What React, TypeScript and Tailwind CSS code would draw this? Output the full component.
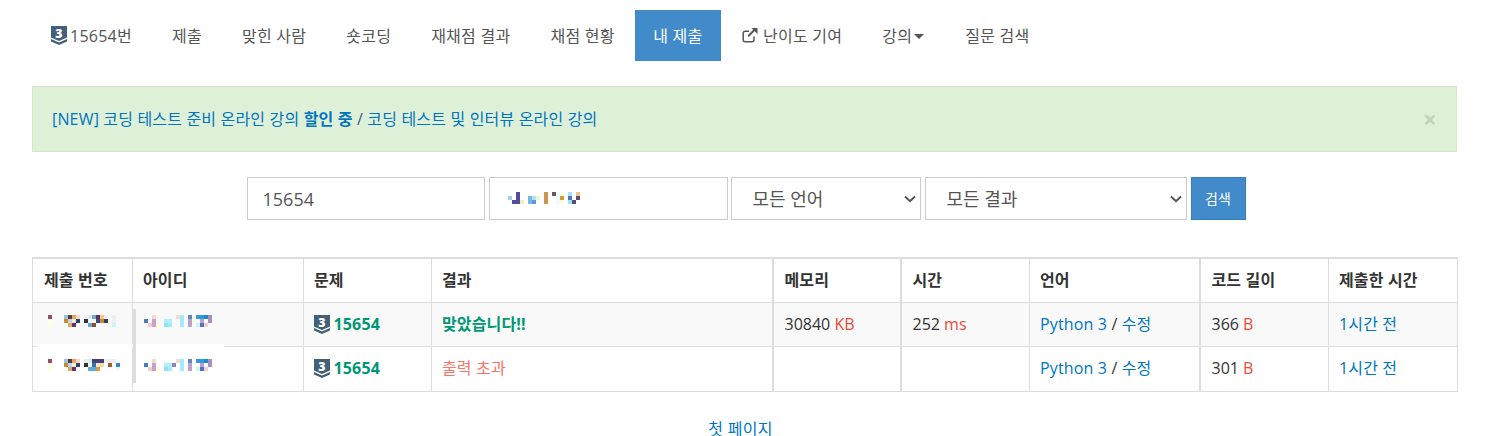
const font = "font-['Open_Sans','Noto_Sans_CJK_KR',sans-serif]";

type Cell = [number, number, string];

// censored blocks in the reference: 4px cells, [col, row, colour]
const idSearch: Cell[] = [
    [0, 1, '#a0d4ee'], [2, 0, '#4f4f9a'], [2, 1, '#4f4f9a'], [1, 2, '#4f4f9a'], [2, 2, '#4f4f9a'], [3, 2, '#fbe8c0'],
    [5, 1, '#78b4e8'], [6, 1, '#b4e0f0'], [7, 1, '#eef4d8'], [5, 2, '#78b4e8'], [6, 2, '#5f9ad8'],
    [9, 0, '#cc9650'], [9, 1, '#cc9650'], [9, 2, '#cc9650'],
    [11, 0, '#705860'], [12, 0, '#f0fcfc'], [13, 0, '#fdfde0'], [12, 1, '#e8fafa'], [13, 1, '#d8983c'], [12, 2, '#f0fcfc'], [13, 2, '#fdfde0'],
    [15, 0, '#a8dcf8'], [17, 0, '#f0c088'], [15, 1, '#5078b8'], [17, 1, '#585070'], [15, 2, '#a8dcf8'], [16, 2, '#585070'],
];

const noRow1: Cell[] = [
    [0, 0, '#9a4a6a'], [4, 0, '#9bc4dc'], [5, 0, '#5a3a3a'], [6, 0, '#e0a860'], [7, 0, '#f5dcc0'], [9, 0, '#eeeeee'], [10, 0, '#d0f0fa'], [11, 0, '#7aa5cf'], [12, 0, '#5a3060'], [13, 0, '#f5c88a'], [14, 0, '#eeeeee'], [16, 0, '#eeeeee'], [17, 0, '#f5fbfb'],
    [0, 1, '#fdfde8'], [4, 1, '#cc8830'], [5, 1, '#b8d8ee'], [6, 1, '#f0f0e0'], [7, 1, '#2f4070'], [9, 1, '#333333'], [12, 1, '#3a4a8a'], [13, 1, '#cc8830'], [14, 1, '#334055'], [16, 1, '#f0f0f0'],
    [0, 2, '#fdfde0'], [5, 2, '#e0a860'], [6, 2, '#6a3070'], [10, 2, '#5fa8e0'], [11, 2, '#8a5030'], [16, 2, '#c8f4fa'],
];

const noRow2: Cell[] = [
    [0, 0, '#9a4a6a'], [4, 0, '#9bc4dc'], [5, 0, '#5a3a3a'], [6, 0, '#e0a860'], [7, 0, '#f5dcc0'], [9, 0, '#eeeeee'], [10, 0, '#d0f0fa'], [11, 0, '#45407a'], [12, 0, '#45407a'], [13, 0, '#45407a'], [14, 0, '#eeeeee'], [15, 0, '#f0f0f0'], [16, 0, '#eeeeee'],
    [0, 1, '#fdfde8'], [4, 1, '#cc8830'], [5, 1, '#b8d8ee'], [6, 1, '#f0f0e0'], [7, 1, '#2f4070'], [9, 1, '#333333'], [11, 1, '#3f70a8'], [12, 1, '#f8e8c8'], [13, 1, '#f5dca0'], [15, 1, '#a85a28'], [17, 1, '#2f88d8'],
    [0, 2, '#fdfde0'], [5, 2, '#e0a860'], [6, 2, '#6a3070'], [10, 2, '#5fa8e0'], [11, 2, '#5fa8e0'], [12, 2, '#d89a40'], [17, 2, '#effbff'],
];

const idCells = (tail: string): Cell[] => [
    [2, 0, '#f8d8cc'], [8, 0, '#f0dcd0'], [9, 0, '#a8e8fc'], [11, 0, '#5a8ac0'], [13, 0, '#2f9adf'], [14, 0, '#2f9adf'], [15, 0, '#1f88cc'], [16, 0, '#a890c0'],
    [0, 1, '#4a78c8'], [2, 1, '#c8a0c8'], [5, 1, '#b0f0fc'], [6, 1, '#b0f0fc'], [7, 1, tail], [9, 1, '#a8e8fc'], [11, 1, '#c0a0c8'], [14, 1, '#c0a0c8'], [16, 1, '#a890c0'],
    [1, 2, '#f8c8cc'], [2, 2, '#c8a0c8'], [3, 2, '#fdfde0'], [5, 2, '#90e0f8'], [6, 2, '#a8e8fc'], [9, 2, '#a8e8fc'], [11, 2, '#c0a0c8'], [13, 2, '#c8f8f8'], [14, 2, '#5a70c8'], [15, 2, '#f0d0d0'],
];

function Mosaic({ cells, className }: { cells: Cell[]; className?: string }) {
    return (
        <svg width="72" height="12" viewBox="0 0 72 12" shapeRendering="crispEdges" className={className}>
            {cells.map(([c, r, fill]) => (
                <rect key={`${c}-${r}`} x={c * 4} y={r * 4} width="4" height="4" fill={fill} />
            ))}
        </svg>
    );
}

function TierIcon() {
    return (
        <svg width="16" height="19" viewBox="0 0 16 19" className="shrink-0">
            <path d="M0 0H16V11.5L8 15L0 11.5Z" fill="#435f7a" />
            <path d="M0 13L8 16.5L16 13V15.5L8 19L0 15.5Z" fill="#435f7a" />
            <text x="8" y="11.5" textAnchor="middle" fontSize="12.5" fontWeight="800" fill="#fff" fontFamily="'Open Sans', sans-serif">3</text>
        </svg>
    );
}

function ExternalIcon() {
    return (
        <svg width="16" height="15" viewBox="0 0 16 15" className="shrink-0">
            <path d="M7 3.2H3.2A2 2 0 0 0 1.2 5.2V11.8A2 2 0 0 0 3.2 13.8H10A2 2 0 0 0 12 11.8V8.5" fill="none" stroke="#555" strokeWidth="1.5" />
            <path d="M6.2 8.2L12.6 1.8" fill="none" stroke="#555" strokeWidth="2" />
            <path d="M9.5 0H15.5V6Z" fill="#555" />
        </svg>
    );
}

const navItems = ['제출', '맞힌 사람', '숏코딩', '재채점 결과', '채점 현황'];

function Nav() {
    return (
        <nav className="flex h-[51px] pl-[32px] mt-[10px] text-[#555] text-[16px] tracking-[0.25px]">
            <a className="flex items-center gap-[3px] pl-[19px] pr-[20px]">
                <TierIcon />
                <span>15654번</span>
            </a>
            {navItems.map((label) => (
                <a key={label} className="flex items-center px-[20px] whitespace-nowrap">{label}</a>
            ))}
            <a className="flex items-center px-[18.5px] bg-[#428bca] text-white whitespace-nowrap">내 제출</a>
            <a className="flex items-center gap-[5px] pl-[21px] pr-[20px] whitespace-nowrap">
                <ExternalIcon />
                난이도 기여
            </a>
            <a className="flex items-center pl-[20px] pr-[21px] whitespace-nowrap">
                강의
                <span className="ml-[2px] mt-[2px] border-x-[5px] border-t-[5px] border-x-transparent border-t-[#555]" />
            </a>
            <a className="flex items-center px-[20px] whitespace-nowrap">질문 검색</a>
        </nav>
    );
}

function Alert() {
    return (
        <div className="w-[1425px] ml-[32px] mt-[25px] h-[66px] pl-[19px] pr-[19px] flex items-center justify-between border border-[#d6e9c6] bg-[#dff0d8] text-[#0076c0] text-[16px] tracking-[0.17px]">
            <p>
                [NEW] 코딩 테스트 준비 온라인 강의 <b className="font-bold">할인 중</b> <span className="text-[#35607f]">/</span> 코딩 테스트 및 인터뷰 온라인 강의
            </p>
            <span className="text-[#c3d3bd] text-[24px] font-bold leading-none">×</span>
        </div>
    );
}

function Select({ label, width }: { label: string; width: string }) {
    return (
        <div className={`relative ${width}`}>
            <select className="w-full h-[43px] appearance-none border border-[#ccc] bg-white text-[#555] text-[18px] pl-[21px] pt-[1px] outline-none" defaultValue={label}>
                <option value={label}>{label}</option>
            </select>
            <svg width="12" height="8" viewBox="0 0 12 8" className="absolute right-[5px] top-[18px] pointer-events-none">
                <path d="M1 1.5L6 6.2L11 1.5" fill="none" stroke="#555" strokeWidth="2" />
            </svg>
        </div>
    );
}

function SearchBar() {
    const field = 'h-[43px] border border-[#ccc] bg-white text-[#555] text-[18px] px-[15px] outline-none';
    return (
        <form className="mt-[25px] flex justify-center pl-[2px] gap-[4px]">
            <input defaultValue="15654" className={`${field} w-[238px]`} />
            <div className="relative">
                <input className={`${field} w-[239px]`} />
                <Mosaic cells={idSearch} className="absolute left-[19px] top-[15px]" />
            </div>
            <div className="ml-[-1px]"><Select label="모든 언어" width="w-[190px]" /></div>
            <Select label="모든 결과" width="w-[262px]" />
            <button type="button" className="w-[55px] h-[43px] bg-[#428bca] border border-[#357ebd] text-white text-[14px]">검색</button>
        </form>
    );
}

const Unit = ({ children }: { children: string }) => <span className="text-[#e74c3c]">{children}</span>;

const cell = 'border border-[#ddd] px-[10px] align-middle';
const thick = 'border-l-2 border-l-[#ddd] pl-[11px]';

function Row({ shade, noCells, tail, result, memory, time, length }: {
    shade?: boolean;
    noCells: Cell[];
    tail: string;
    result: React.ReactNode;
    memory?: string;
    time?: string;
    length: string;
}) {
    // the last row is a pixel taller, its text stays where it was
    const td = shade ? cell : `${cell} pb-[1px]`;
    return (
        <tr className={shade ? 'h-[44px] bg-[#f9f9f9]' : 'h-[45px] bg-white'}>
            <td className={td}><Mosaic cells={noCells} className="ml-[5px] -mt-[6px]" /></td>
            <td className={td}><Mosaic cells={idCells(tail)} className="ml-[1px] -mt-[6px]" /></td>
            <td className={td}>
                <a className="flex items-center gap-[3.5px] font-bold text-[#009874]"><TierIcon />15654</a>
            </td>
            <td className={td}>{result}</td>
            <td className={`${td} ${thick} tracking-normal`}>{memory && <>{memory} <Unit>KB</Unit></>}</td>
            <td className={`${td} ${thick} tracking-normal`}>{time && <>{time} <Unit>ms</Unit></>}</td>
            <td className={`${td} text-[#0076c0]`}>Python 3 <span className="text-[#333]">/</span> 수정</td>
            <td className={`${td} ${thick} tracking-normal`}>{length} <Unit>B</Unit></td>
            <td className={`${td} text-[#0076c0]`}>1시간 전</td>
        </tr>
    );
}

const columns = [
    { label: '제출 번호', w: 'w-[100px] pl-[11px]' },
    { label: '아이디', w: 'w-[171px]' },
    { label: '문제', w: 'w-[128px]' },
    { label: '결과', w: 'w-[341px]' },
    { label: '메모리', w: 'w-[128px]', bold: true },
    { label: '시간', w: 'w-[129px]', bold: true },
    { label: '언어', w: 'w-[170px]' },
    { label: '코드 길이', w: 'w-[129px]', bold: true },
    { label: '제출한 시간', w: 'w-[129px]' },
];

function Results() {
    return (
        <div className="relative mx-[32px] mt-[37px]">
            <table className="w-[1425px] table-fixed border-collapse text-[16px] text-[#333] tracking-[0.15px]">
                <thead>
                    <tr className="h-[44px]">
                        {columns.map((c) => (
                            <th key={c.label} className={`${c.w} ${cell} border-t-2 border-t-[#ddd] text-left font-bold ${c.bold ? thick : ''}`}>{c.label}</th>
                        ))}
                    </tr>
                </thead>
                <tbody>
                    <Row shade noCells={noRow1} tail="#ffffff" result={<span className="font-bold text-[#009874]">맞았습니다!!</span>} memory="30840" time="252" length="366" />
                    <Row noCells={noRow2} tail="#8a80c8" result={<span className="text-[#fa7268]">출력 초과</span>} length="301" />
                </tbody>
            </table>
            {/* leftovers of the censoring over the table lines */}
            <div className="absolute left-[5px] top-[87px] w-[187px] h-[3px] bg-white" />
            <div className="absolute left-[101px] top-[52px] w-[3px] h-[74px] bg-[#ddd]" />
        </div>
    );
}

export default function App() {
    return (
        <div className={`${font} w-[1490px] h-[436px] overflow-hidden bg-white`}>
            <Nav />
            <Alert />
            <SearchBar />
            <Results />
            <a className="block mt-[30px] pr-[9px] text-center text-[#0076c0] text-[16px] leading-[14px] tracking-[0.25px]">첫 페이지</a>
        </div>
    );
}
